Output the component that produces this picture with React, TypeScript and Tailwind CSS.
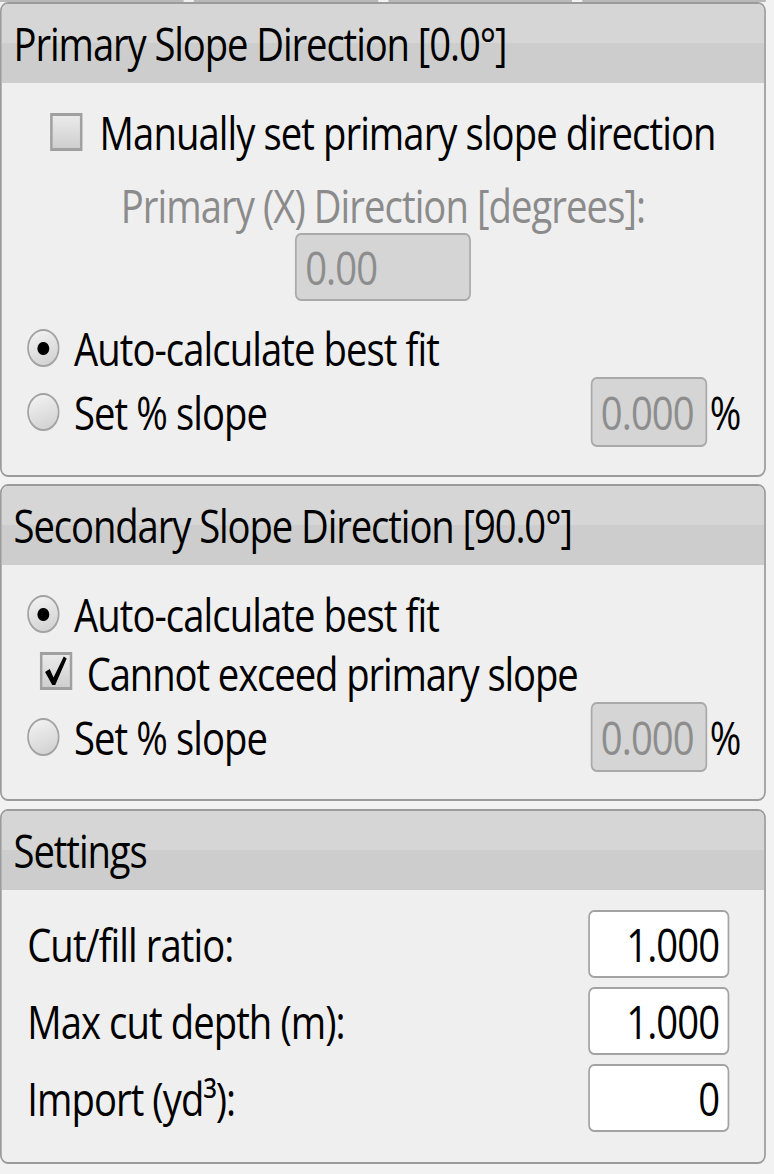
import type { ReactNode } from 'react'

function Radio({ checked }: { checked?: boolean }) {
  return (
    <div className="w-[38px] h-[38px] shrink-0 rounded-full border-2 border-[#a2a2a2] bg-[linear-gradient(160deg,#f4f4f4,#cfcfcf)] flex items-center justify-center">
      {checked && <div className="w-[14px] h-[13px] rounded-full bg-black" />}
    </div>
  )
}

function Checkbox({ checked }: { checked?: boolean }) {
  return (
    <div className="w-[38px] h-[38px] shrink-0 border-[3px] border-[#a0a0a0] bg-[linear-gradient(#eaeaea,#cfcfcf)] flex items-center justify-center">
      {checked && (
        <svg viewBox="0 0 32 32" className="w-[32px] h-[32px]">
          <path d="M3 17 L8.5 14 L13 22.5 L25 1.5 L28.5 3.5 L15 30 L11.5 30 Z" fill="#000" />
        </svg>
      )}
    </div>
  )
}

function Panel({ title, children, className = '' }: { title: string; children: ReactNode; className?: string }) {
  return (
    <div className={`border-2 border-[#9b9b9b] rounded-[9px] bg-[#efefef] overflow-hidden ${className}`}>
      <div className="h-[79px] flex items-center pl-[14px] bg-[linear-gradient(#d6d6d6_50%,#cdcdcd_50%)] text-[45px] tracking-[-1.3px]">
        {title}
      </div>
      {children}
    </div>
  )
}

function SlopeRow() {
  return (
    <div className="h-[70px] flex items-center pl-[30px] pr-[28px]">
      <Radio />
      <span className="ml-[17px]">Set % slope</span>
      <div className="flex-1" />
      <input
        disabled
        value="0.000"
        readOnly
        className="w-[137px] h-[70px] rounded-[7px] border-2 border-[#a9a9a9] bg-[#d5d5d5] pl-[10px] text-[#8d8d8d] outline-none"
      />
      <span className="ml-[3px]">%</span>
    </div>
  )
}

function SettingRow({ label, value }: { label: string; value: string }) {
  return (
    <div className="h-[68px] flex items-center pl-[30px] pr-[41px]">
      <span className="flex-1">{label}</span>
      <input
        value={value}
        readOnly
        className="w-[166px] h-[68px] rounded-[7px] border-2 border-[#a3a3a3] bg-white text-right pr-[10px] text-black outline-none"
      />
    </div>
  )
}

export default function App() {
  return (
    <div className="w-full h-[1174px] overflow-hidden bg-[#f2f2f2]">
      <div className="w-[911px] origin-top-left scale-x-[0.85] font-['Open_Sans',sans-serif] text-[45px] tracking-[-1.1px] leading-none text-black">
        {/* buttons above, just their bottom edge */}
        <div className="w-[901px] h-[2px] flex gap-[12px]">
          <div className="flex-1 bg-[#b9b9b9]" />
          <div className="flex-1 bg-[#b9b9b9]" />
          <div className="flex-1 bg-[#b9b9b9]" />
          <div className="flex-1 bg-[#b9b9b9]" />
        </div>

        <div className="w-[901px] flex flex-col">
          <Panel title="Primary Slope Direction [0.0°]">
            <div className="pt-[25px] pb-[28px] flex flex-col">
              <div className="h-[48px] flex items-center justify-center">
                <Checkbox />
                <span className="ml-[20px]">Manually set primary slope direction</span>
              </div>
              <div className="h-[48px] mt-[25px] flex items-center justify-center text-[#8b8b8b]">
                Primary (X) Direction [degrees]:
              </div>
              <div className="mt-[4px] flex justify-center">
                <input
                  disabled
                  value="0.00"
                  readOnly
                  className="w-[207px] h-[68px] rounded-[7px] border-2 border-[#a9a9a9] bg-[#d5d5d5] pl-[10px] text-[#8d8d8d] outline-none"
                />
              </div>
              <div className="h-[48px] mt-[23px] flex items-center pl-[30px]">
                <Radio checked />
                <span className="ml-[17px]">Auto-calculate best fit</span>
              </div>
              <div className="mt-[5px]">
                <SlopeRow />
              </div>
            </div>
          </Panel>

          <Panel title="Secondary Slope Direction [90.0°]" className="mt-[7px]">
            <div className="pt-[25px] pb-[27px] flex flex-col">
              <div className="h-[48px] flex items-center pl-[30px]">
                <Radio checked />
                <span className="ml-[17px]">Auto-calculate best fit</span>
              </div>
              <div className="h-[48px] mt-[9px] flex items-center pl-[45px]">
                <Checkbox checked />
                <span className="ml-[17px] mt-[4px] tracking-[-1.3px]">Cannot exceed primary slope</span>
              </div>
              <div className="mt-[7px]">
                <SlopeRow />
              </div>
            </div>
          </Panel>

          <Panel title="Settings" className="mt-[8px]">
            <div className="pt-[20px] pb-[30px] flex flex-col gap-[9px]">
              <SettingRow label="Cut/fill ratio:" value="1.000" />
              <SettingRow label="Max cut depth (m):" value="1.000" />
              <SettingRow label="Import (yd³):" value="0" />
            </div>
          </Panel>
        </div>
      </div>
    </div>
  )
}
